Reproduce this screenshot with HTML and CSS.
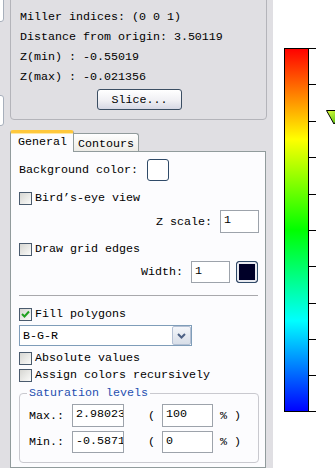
FILE: index.html
```html
<!DOCTYPE html>
<html>
<head>
<meta charset="utf-8">
<link rel="stylesheet" href="styles.css">
</head>
<body>
<div class="app">
  <div class="edge">
    <div class="sliver s1"></div>
    <div class="sliver s2"></div>
  </div>
  <div class="main">
    <div class="group-top">
      <div class="line">Miller indices: (0 0 1)</div>
      <div class="line">Distance from origin: 3.50119</div>
      <div class="line">Z(min) : -0.55019</div>
      <div class="line">Z(max) : -0.021356</div>
      <button class="btn">Slice...</button>
    </div>
    <div class="tabs">
      <div class="tab active">General</div>
      <div class="tab">Contours</div>
    </div>
    <div class="panel">
      <div class="row r-bg"><span>Background color:</span><span class="swatch white"></span></div>
      <div class="check r-bird"><span class="box"></span><span>Bird’s-eye view</span></div>
      <div class="row right r-z"><span>Z scale:</span><span class="field w39">1</span></div>
      <div class="check r-grid"><span class="box"></span><span>Draw grid edges</span></div>
      <div class="row right r-width"><span>Width:</span><span class="field w39 h22">1</span><span class="swatch dark"></span></div>
      <div class="sep"></div>
      <div class="check r-fill"><span class="box"><svg width="11" height="11" viewBox="0 0 11 11"><path d="M2 5 L4.5 7.5 L9 2.5" fill="none" stroke="#21a121" stroke-width="2"/></svg></span><span>Fill polygons</span></div>
      <div class="select"><span class="sel-text">B-G-R</span><span class="sel-btn"><svg width="9" height="6" viewBox="0 0 9 6"><path d="M1 1 L4.5 4.5 L8 1" fill="none" stroke="#4d6185" stroke-width="2"/></svg></span></div>
      <div class="check r-abs"><span class="box"></span><span>Absolute values</span></div>
      <div class="check r-assign"><span class="box"></span><span>Assign colors recursively</span></div>
      <fieldset class="sat">
        <legend>Saturation levels</legend>
        <div class="sat-row">
          <span class="lbl">Max.:</span><span class="field w52">2.98023</span><span class="paren">(</span><span class="field w51">100</span><span class="pct">%</span><span class="pct">)</span>
        </div>
        <div class="sat-row second">
          <span class="lbl">Min.:</span><span class="field w52">-0.5871</span><span class="paren">(</span><span class="field w51">0</span><span class="pct">%</span><span class="pct">)</span>
        </div>
      </fieldset>
    </div>
  </div>
  <div class="canvas">
    <svg width="62" height="468" viewBox="0 0 62 468">
      <defs>
        <linearGradient id="jet" x1="0" y1="0" x2="0" y2="1">
          <stop offset="0" stop-color="#ff0000"/>
          <stop offset="0.25" stop-color="#ffff00"/>
          <stop offset="0.5" stop-color="#00ff00"/>
          <stop offset="0.75" stop-color="#00ffff"/>
          <stop offset="1" stop-color="#0000ff"/>
        </linearGradient>
        <linearGradient id="tri" x1="0" y1="0" x2="1" y2="1">
          <stop offset="0" stop-color="#e0ff40"/>
          <stop offset="1" stop-color="#30b000"/>
        </linearGradient>
      </defs>
      <rect x="11.5" y="48.5" width="24" height="363" fill="url(#jet)" stroke="#000" stroke-width="1"/>
      <g stroke="#000" stroke-width="1">
        <line x1="35" y1="48.5" x2="43" y2="48.5"/>
        <line x1="35" y1="84.5" x2="43" y2="84.5"/>
        <line x1="35" y1="121.5" x2="43" y2="121.5"/>
        <line x1="35" y1="157.5" x2="43" y2="157.5"/>
        <line x1="35" y1="194.5" x2="43" y2="194.5"/>
        <line x1="35" y1="230.5" x2="43" y2="230.5"/>
        <line x1="35" y1="266.5" x2="43" y2="266.5"/>
        <line x1="35" y1="303.5" x2="43" y2="303.5"/>
        <line x1="35" y1="339.5" x2="43" y2="339.5"/>
        <line x1="35" y1="375.5" x2="43" y2="375.5"/>
        <line x1="35" y1="411.5" x2="43" y2="411.5"/>
      </g>
      <polygon points="53.5,110.5 72,110.5 61,124" fill="url(#tri)" stroke="#000" stroke-width="1"/>
    </svg>
  </div>
</div>
</body>
</html>
```
FILE: styles.css
```css
html, body {
  margin: 0;
  padding: 0;
}
body {
  width: 335px;
  height: 468px;
  overflow: hidden;
  background: #e0dfe3;
  font-family: "Liberation Mono", "DejaVu Sans Mono", monospace;
  font-size: 11.67px;
  color: #000;
}
.app {
  display: flex;
  height: 468px;
}
.edge {
  width: 10px;
  flex: none;
  display: flex;
  flex-direction: column;
}
.sliver {
  width: 20px;
  margin-left: -18px;
  border: 1px solid #a8b0bc;
  border-radius: 3px;
  background: #fff;
}
.s1 {
  margin-top: -10px;
  height: 30px;
}
.s2 {
  margin-top: 73px;
  height: 29px;
}
.main {
  width: 263px;
  flex: none;
  display: flex;
  flex-direction: column;
}
.group-top {
  width: 257px;
  box-sizing: border-box;
  margin-top: -10px;
  padding: 16px 0 9px 9px;
  border: 1px solid #b4b4ba;
  border-radius: 4px;
  display: flex;
  flex-direction: column;
}
.line {
  height: 20px;
  line-height: 20px;
  white-space: pre;
}
.btn {
  margin: 2px 0 0 77px;
  width: 85px;
  height: 21px;
  padding: 0;
  font: inherit;
  color: #000;
  border: 1px solid #3b4e63;
  border-radius: 3px;
  background: linear-gradient(#ffffff, #f0f0f4 55%, #d6d8e4);
}
.tabs {
  margin-top: 10px;
  display: flex;
  align-items: flex-end;
  height: 22px;
  margin-bottom: -1px;
  position: relative;
  z-index: 1;
}
.tab {
  line-height: 14px;
  white-space: pre;
}
.tab.active {
  width: 64px;
  box-sizing: border-box;
  height: 22px;
  padding: 2px 0 0 7px;
  border: 1px solid #919b9c;
  border-top: 3px solid #ffc83c;
  border-bottom: none;
  border-radius: 3px 3px 0 0;
  background: #fcfcfe;
  box-shadow: inset 0 1px 0 #ffe7a2;
}
.tab:not(.active) {
  width: 65px;
  box-sizing: border-box;
  height: 18px;
  margin-bottom: 1px;
  padding: 3px 0 0 4px;
  border: 1px solid #919b9c;
  border-bottom: none;
  border-left: none;
  border-radius: 0 3px 0 0;
  background: linear-gradient(#ffffff, #ecebe6);
}
.panel {
  width: 256px;
  box-sizing: border-box;
  flex: 1;
  border: 1px solid #919b9c;
  background: #fcfcfe;
  padding: 7px 6px 0 8px;
  display: flex;
  flex-direction: column;
}
.row {
  display: flex;
  align-items: center;
  white-space: pre;
}
.row.right {
  justify-content: flex-end;
}
.r-bg {
  height: 22px;
}
.swatch {
  width: 22px;
  height: 22px;
  box-sizing: border-box;
  border: 1px solid #2f4a68;
  border-radius: 3px;
}
.swatch.white {
  margin-left: 9px;
  background: #fff;
}
.swatch.dark {
  margin-left: 6px;
  margin-right: 1px;
  background: #000028;
  box-shadow: inset 0 0 0 2px #e8eaf0;
}
.check {
  display: flex;
  align-items: center;
  height: 13px;
  line-height: 13px;
  white-space: pre;
}
.box {
  width: 13px;
  height: 13px;
  box-sizing: border-box;
  border: 1px solid #4a5b6e;
  background: linear-gradient(135deg, #d6d6d2, #fbfbf9);
  margin-right: 3px;
  display: flex;
  align-items: center;
  justify-content: center;
}
.r-bird { margin-top: 11px; }
.r-z { margin-top: 5px; height: 23px; }
.r-grid { margin-top: 10px; }
.r-width { margin-top: 5px; height: 22px; }
.field {
  box-sizing: border-box;
  height: 23px;
  border: 1px solid #9da3ab;
  background: #fff;
  padding: 0 0 0 3px;
  line-height: 19px;
  overflow: hidden;
  white-space: pre;
  font-size: 11.67px;
}
.field.h22 { height: 22px; line-height: 18px; }
.w39 { width: 39px; margin-left: 8px; }
.sep {
  margin-top: 12px;
  margin-right: 1px;
  height: 1px;
  background: #a8a8ac;
}
.r-fill { margin-top: 12px; }
.select {
  margin-top: 4px;
  width: 173px;
  height: 21px;
  box-sizing: border-box;
  border: 1px solid #7f9db9;
  background: #fff;
  display: flex;
  align-items: center;
  justify-content: space-between;
}
.sel-text {
  padding-left: 3px;
}
.sel-btn {
  width: 19px;
  height: 19px;
  box-sizing: border-box;
  border: 1px solid #b4c0d4;
  border-radius: 2px;
  background: linear-gradient(#f4f6fa, #d8dee8);
  display: flex;
  align-items: center;
  justify-content: center;
}
.r-abs { margin-top: 6px; }
.r-assign { margin-top: 4px; }
.sat {
  margin: 4px 0 0 0;
  width: 240px;
  box-sizing: border-box;
  min-width: 0;
  padding: 0 9px 9px 9px;
  border: 1px solid #c9c9cf;
  border-radius: 4px;
}
.sat legend {
  padding: 0 2px;
  margin-left: -2px;
  line-height: 14px;
  color: #1f4fb0;
}
.sat-row {
  margin-top: 4px;
  height: 23px;
  display: flex;
  align-items: center;
  white-space: pre;
}
.sat-row.second {
  height: 22px;
}
.sat-row.second .field {
  height: 22px;
  line-height: 18px;
}
.w52 { width: 52px; margin-left: 8px; }
.w51 { width: 51px; margin-left: 7px; }
.paren { margin-left: 24px; }
.pct { margin-left: 7px; }
.canvas {
  flex: 1;
  background: #fff;
}
.canvas svg {
  display: block;
}
```
